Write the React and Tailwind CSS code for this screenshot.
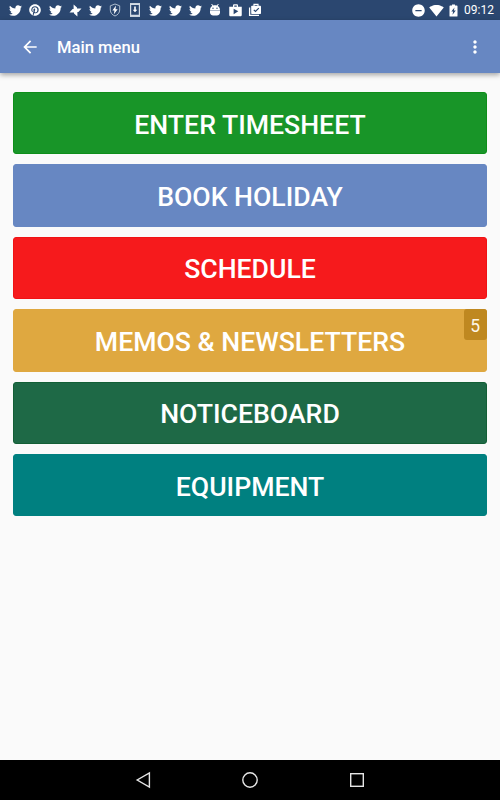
import { FaTwitter, FaPinterest } from "react-icons/fa"
import { MdShop, MdDoNotDisturbOn, MdSignalWifi4Bar, MdArrowBack, MdMoreVert } from "react-icons/md"

const Twitter = () => <FaTwitter size={13} />

const Pinwheel = () => (
    <svg width="13" height="13" viewBox="0 0 13 13" fill="currentColor">
        <path d="M4.6 0.5L8 3.6V6.5H4.6zM12.5 4.6L9.4 8H6.5V4.6zM8.4 12.5L5 9.4V6.5H8.4zM0.5 8.4L3.6 5H6.5V8.4z" />
    </svg>
)

const ShieldBolt = () => (
    <svg width="12" height="14" viewBox="0 0 12 14" fill="none">
        <path d="M6 1L10.7 2.8V7C10.7 9.8 8.7 12 6 13C3.3 12 1.3 9.8 1.3 7V2.8Z" stroke="#aebdce" strokeWidth="1" />
        <path d="M7 2.4L3.4 7.5H5.4L4.9 11.3L8.7 6.2H6.5Z" fill="#fff" />
    </svg>
)

const PhoneDownload = () => (
    <svg width="12" height="16" viewBox="0 0 12 16" fill="none">
        <rect x="1.6" y="1.7" width="8.8" height="12.6" stroke="#d3dbe4" strokeWidth="1.2" />
        <path d="M1 2.2h10M1 13.6h10" stroke="#d3dbe4" strokeWidth="1.6" />
        <path d="M5.2 4.5h1.6v3.2h1.5L6 10.2L3.7 7.7h1.5z" fill="#fff" />
    </svg>
)

const AndroidHead = () => (
    <svg width="12" height="14" viewBox="0 0 12 14" fill="none">
        <path d="M2.6 1L4 3M9.4 1L8 3" stroke="#fff" strokeWidth="1" />
        <path d="M1 7.4C1 3.7 3.3 2.2 6 2.2S11 3.7 11 7.4z" fill="#fff" />
        <path d="M1 7.8h10v1.6C11 11.8 9 12.6 6 12.6S1 11.8 1 9.4z" fill="#fff" />
        <circle cx="4" cy="5.2" r="0.7" fill="#2b4770" />
        <circle cx="8" cy="5.2" r="0.7" fill="#2b4770" />
    </svg>
)

const BagCheck = () => (
    <svg width="14" height="14" viewBox="0 0 14 14" fill="none">
        <path d="M1.6 4.5V12.3H11" stroke="#fff" strokeWidth="1.3" />
        <path d="M6 3V1.4h4V3" stroke="#fff" strokeWidth="1.2" />
        <rect x="3.2" y="2.8" width="9.8" height="8.2" rx="0.8" fill="#fff" />
        <path d="M5.8 6.8L7.5 8.5L10.8 5.2" stroke="#2b4770" strokeWidth="1.2" />
    </svg>
)

const Battery = () => (
    <svg width="9" height="13" viewBox="0 0 9 13" fill="none">
        <path d="M3 0.4h3v1.2h1.8q0.7 0 0.7 0.7v9.6q0 0.7-0.7 0.7H1.2q-0.7 0-0.7-0.7V2.3q0-0.7 0.7-0.7H3z" fill="#fff" />
        <path d="M5.5 3.4L2.3 7.5h1.8L3.5 10.8L6.8 6.6H4.9z" fill="#2b4770" />
    </svg>
)

const notifications = [
    Twitter,
    () => <FaPinterest size={12} />,
    Twitter,
    Pinwheel,
    Twitter,
    ShieldBolt,
    PhoneDownload,
    Twitter,
    Twitter,
    Twitter,
    AndroidHead,
    () => <MdShop size={15} />,
    BagCheck
]

const menu = [
    { label: "ENTER TIMESHEET", color: "bg-[#189528] border-[#0e8e1a]" },
    { label: "BOOK HOLIDAY", color: "bg-[#6787c2] border-[#6787c2]" },
    { label: "SCHEDULE", color: "bg-[#f61a1c] border-[#f01214]" },
    { label: "MEMOS & NEWSLETTERS", color: "bg-[#dfa840] border-[#dfa840]", badge: 5 },
    { label: "NOTICEBOARD", color: "bg-[#1e6946] border-[#135f36]" },
    { label: "EQUIPMENT", color: "bg-[#008080] border-[#008080]" }
]

export default function App() {
    return (
        <main className="flex h-[800px] w-[500px] flex-col overflow-hidden bg-[#fafafa] font-[Roboto,sans-serif]">
            <section className="flex h-5 flex-none items-center justify-between bg-[#2b4770] pl-[5px] text-white">
                <div className="flex">
                    {notifications.map((Icon, i) => (
                        <span key={i} className="flex h-5 w-5 items-center justify-center"><Icon /></span>
                    ))}
                </div>
                <div className="flex items-center pr-1.5">
                    <MdDoNotDisturbOn size={15} className="mr-[3px]" />
                    <MdSignalWifi4Bar size={15} className="mr-[5px]" />
                    <span className="mr-[6px]"><Battery /></span>
                    <span className="text-[12px] leading-5">09:12</span>
                </div>
            </section>

            <header className="z-10 flex h-[53px] flex-none items-center bg-[#6787c2] text-white shadow-[0_2px_5px_rgba(0,0,0,0.35)]">
                <MdArrowBack size={20} className="ml-5" />
                <h1 className="ml-[17px] flex-1 pt-[3px] text-[16.6px] font-medium">Main menu</h1>
                <MdMoreVert size={20} className="mr-[15px]" />
            </header>

            <section className="flex flex-1 flex-col gap-[10.25px] px-[13.4px] pt-[19px]">
                {menu.map((item) => (
                    <button key={item.label} className={`relative flex h-[62.2px] w-full items-center justify-center rounded-[3px] border pt-[3px] text-[26.65px] leading-[40px] font-medium text-white ${item.color}`}>
                        {item.label}
                        {item.badge && (
                            <span className="absolute -top-px -right-px flex h-[31px] w-[23px] items-center justify-center rounded-[3px] bg-[#bf8820] pt-[2px] text-[17.5px] font-normal text-[#fdf6e8]">{item.badge}</span>
                        )}
                    </button>
                ))}
            </section>

            <nav className="flex h-10 flex-none items-center justify-center bg-black text-white">
                <svg width="240" height="20" viewBox="0 0 240 20" fill="none" stroke="#e6e6e6" strokeWidth="1.4">
                    <path d="M19.4 2.9V17.1L7.2 10Z" />
                    <circle cx="120" cy="10" r="7.2" />
                    <rect x="220.7" y="3.7" width="12.6" height="12.6" />
                </svg>
            </nav>
        </main>
    )
}
